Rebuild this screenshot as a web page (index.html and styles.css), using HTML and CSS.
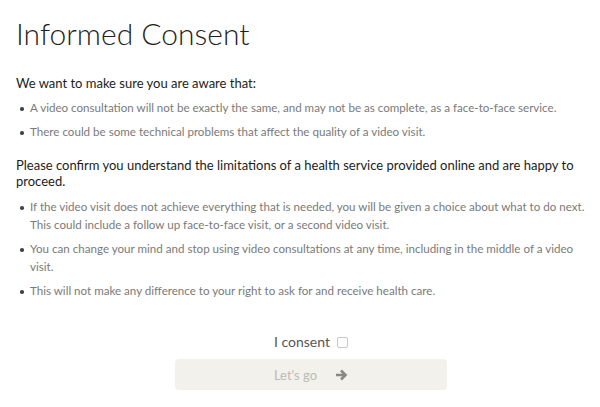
FILE: index.html
```html
<!DOCTYPE html>
<html lang="en">
<head>
<meta charset="utf-8">
<title>Informed Consent</title>
<link rel="stylesheet" href="styles.css">
</head>
<body>
<main class="page">
  <h1 class="title">Informed Consent</h1>
  <p class="lead">We want to make sure you are aware that:</p>
  <ul class="points">
    <li>A video consultation will not be exactly the same, and may not be as complete, as a face-to-face service.</li>
    <li>There could be some technical problems that affect the quality of a video visit.</li>
  </ul>
  <p class="lead">Please confirm you understand the limitations of a health service provided online and are happy to proceed.</p>
  <ul class="points points-second">
    <li>If the video visit does not achieve everything that is needed, you will be given a choice about what to do next. This could include a follow up face-to-face visit, or a second video visit.</li>
    <li>You can change your mind and stop using video consultations at any time, including in the middle of a video visit.</li>
    <li>This will not make any difference to your right to ask for and receive health care.</li>
  </ul>
  <div class="consent">
    <label class="consent-label">I consent <span class="box"></span></label>
    <button class="go" type="button" disabled>
      <span class="go-text">Let's go</span>
      <svg class="arrow" width="13" height="12" viewBox="0 0 13 12"><path d="M1 6h9M6 1.5L10.5 6 6 10.5" fill="none" stroke="#8a8884" stroke-width="2.6" stroke-linecap="butt" stroke-linejoin="miter"/></svg>
    </button>
  </div>
</main>
</body>
</html>
```
FILE: styles.css
```css
html, body {
  margin: 0;
  padding: 0;
  background: #fff;
}
body {
  font-family: Lato, "Noto Sans", sans-serif;
  color: #222;
}
.page {
  padding: 11px 16px 0 16px;
  width: 572px;
}
.title {
  margin: 0;
  font-size: 30px;
  font-weight: 300;
  line-height: 44px;
  color: #1f1f24;
}
.lead {
  margin: 20px 0 0 0;
  font-size: 13px;
  line-height: 16px;
  color: #1c1c1c;
}
.points + .lead {
  margin-top: 16px;
}
.points {
  list-style: none;
  margin: 8px 0 0 0;
  padding: 0;
  display: flex;
  flex-direction: column;
  gap: 6px;
}
.points-second {
  margin-top: 9px;
}
.points li {
  position: relative;
  padding-left: 14px;
  font-size: 11.6px;
  line-height: 18px;
  color: #7a7a7a;
}
.points li::before {
  content: "";
  position: absolute;
  left: 4px;
  top: 8px;
  width: 3.5px;
  height: 3.5px;
  border-radius: 50%;
  background: #444;
}
.consent {
  margin-top: 33px;
  padding-left: 18px;
  display: flex;
  flex-direction: column;
  align-items: center;
  gap: 8px;
}
.consent-label {
  display: flex;
  align-items: center;
  gap: 7px;
  font-size: 14px;
  color: #555;
  line-height: 18px;
}
.box {
  width: 9px;
  height: 9px;
  border: 1px solid #c8c8c8;
  border-radius: 2px;
}
.go {
  width: 272px;
  height: 31px;
  border: none;
  border-radius: 4px;
  background: #f2f1ec;
  display: flex;
  align-items: center;
  justify-content: center;
  gap: 18px;
  font-family: inherit;
  font-size: 13px;
  color: #bdbbb6;
  padding: 0;
}
.arrow {
  display: block;
}
```
